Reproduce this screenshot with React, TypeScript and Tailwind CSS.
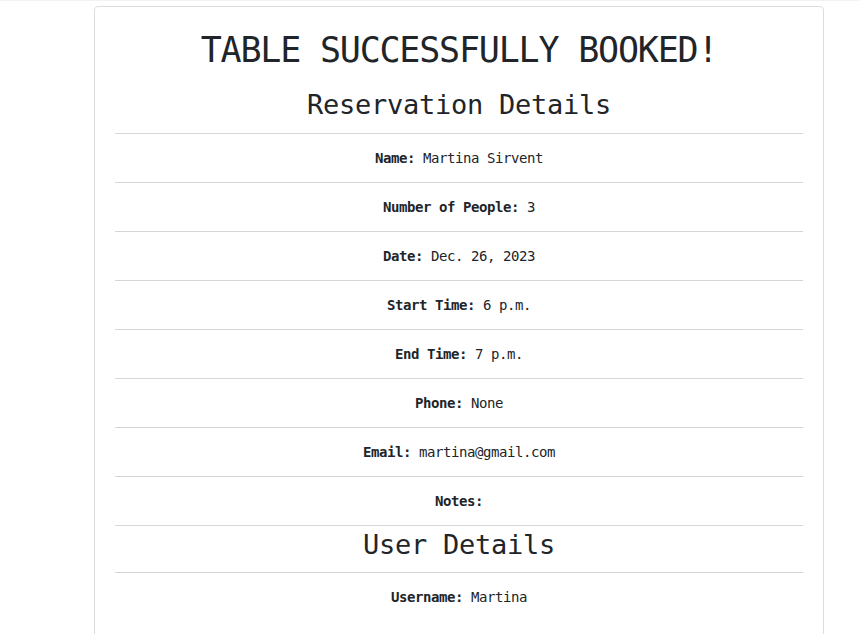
import React from 'react'

const mono = { fontFamily: '"DejaVu Sans Mono", "Liberation Mono", monospace' }

const rows: [string, string][] = [
  ['Name', 'Martina Sirvent'],
  ['Number of People', '3'],
  ['Date', 'Dec. 26, 2023'],
  ['Start Time', '6 p.m.'],
  ['End Time', '7 p.m.'],
  ['Phone', 'None'],
  ['Email', 'martina@gmail.com'],
  ['Notes', ''],
]

function Row({ label, value }: { label: string; value: string }) {
  return (
    <div className="border-t border-[#d6d6d6] h-[49px] flex items-center justify-center text-[14px] tracking-[-0.43px] text-[#212529]">
      <p>
        <span className="font-bold">{label}:</span>
        {value ? ' ' + value : ''}
      </p>
    </div>
  )
}

export default function App() {
  return (
    <div className="min-h-[634px] bg-white border-t border-[#f2f2f2]" style={mono}>
      <div className="ml-[94px] mt-[5px] w-[730px] border border-[#dcdcdc] rounded-[4px] px-[20px] pt-[15px] pb-[40px]">
        <h1 className="text-center text-[35px] tracking-[-1.2px] leading-[56px] text-[#212529]">
          TABLE SUCCESSFULLY BOOKED!
        </h1>
        <h2 className="text-center text-[27px] tracking-[-0.25px] leading-[54px] h-[55px] text-[#212529]">
          Reservation Details
        </h2>
        {rows.map(([l, v]) => (
          <Row key={l} label={l} value={v} />
        ))}
        <div className="border-t border-[#d6d6d6] h-[47px] flex items-center justify-center">
          <h2 className="text-[27px] tracking-[-0.25px] text-[#212529] mt-[-8px]">User Details</h2>
        </div>
        <Row label="Username" value="Martina" />
      </div>
    </div>
  )
}
